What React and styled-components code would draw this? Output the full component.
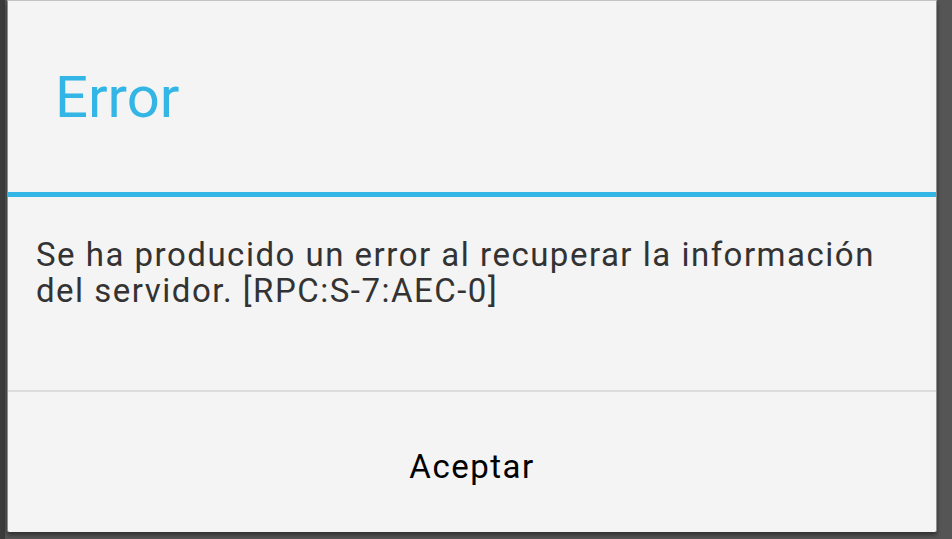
import React from 'react';
import styled, { createGlobalStyle } from 'styled-components';

const GlobalStyle = createGlobalStyle`
    html, body {
        margin: 0;
        padding: 0;
        background: #4f4f4f;
        font-family: Roboto, "Liberation Sans", sans-serif;
    }
`;

const Screen = styled.div`
    width: 952px;
    height: 539px;
    display: flex;
    align-items: flex-start;
    background: linear-gradient(to right, #3b3b3b 0, #3b3b3b 5px, #555555 5px);
    overflow: hidden;
`;

const Dialog = styled.div`
    margin-left: 7px;
    width: 930px;
    height: 532px;
    display: flex;
    flex-direction: column;
    background: #f4f4f4;
    border-top: 1px solid #c4c4c4;
    border-right: 1px solid #8e8e8e;
    border-left: 1px solid #8e8e8e;
    box-sizing: border-box;
    border-radius: 0 0 2px 2px;
    box-shadow: 0 3px 4px rgba(0, 0, 0, 0.45);
`;

const TitleBar = styled.div`
    height: 191px;
    display: flex;
    align-items: center;
    padding-left: 47px;
    color: #33b5e5;
    font-size: 58px;
    border-bottom: 5px solid #33b5e5;
`;

const Message = styled.div`
    height: 195px;
    box-sizing: border-box;
    padding: 40px 40px 0 28px;
    font-size: 33px;
    line-height: 36px;
    letter-spacing: 1.5px;
    color: #333333;
    border-bottom: 2px solid #dcdcdc;
`;

const Buttons = styled.div`
    flex: 1;
    display: flex;
`;

const Button = styled.button`
    flex: 1;
    border: none;
    background: transparent;
    font-family: Roboto, "Liberation Sans", sans-serif;
    font-size: 33px;
    letter-spacing: 1.5px;
    color: #000;
    padding: 8px 0 0;
    cursor: pointer;
`;

export default function App() {
    return (
        <Screen>
            <GlobalStyle />
            <Dialog>
                <TitleBar>Error</TitleBar>
                <Message>
                    Se ha producido un error al recuperar la información del servidor. [RPC:S-7:AEC-0]
                </Message>
                <Buttons>
                    <Button>Aceptar</Button>
                </Buttons>
            </Dialog>
        </Screen>
    );
}
